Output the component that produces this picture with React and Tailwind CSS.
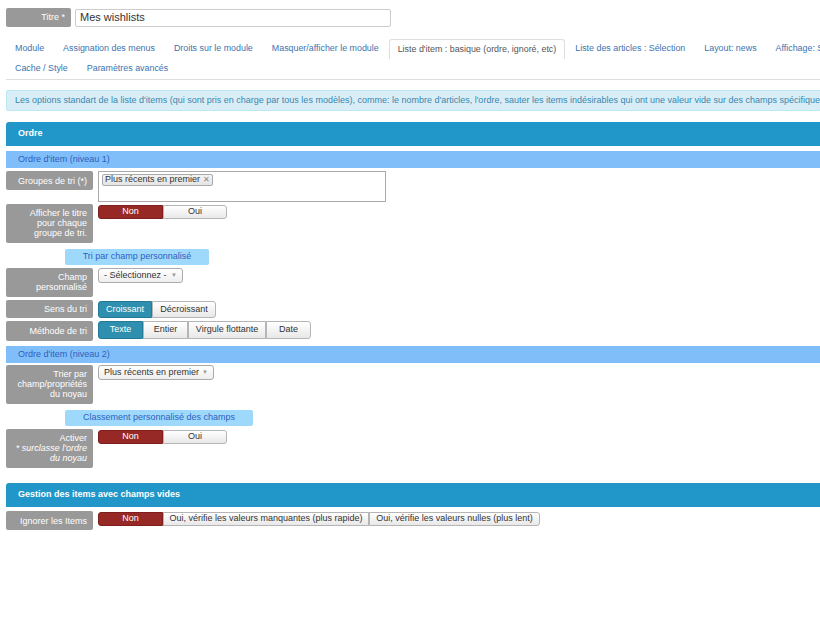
import React from "react";

const tabsRow1 = [
  "Module",
  "Assignation des menus",
  "Droits sur le module",
  "Masquer/afficher le module",
  "Liste d'item : basique (ordre, ignoré, etc)",
  "Liste des articles : Sélection",
  "Layout: news",
  "Affichage: Sous-titre",
];
const tabsRow2 = ["Cache / Style", "Paramètres avancés"];

function Label({ children, h, w = "w-[87px]", center }) {
  return (
    <div
      className={`${w} ${h} shrink-0 bg-[#999999] rounded-[2px] text-white text-[9px] leading-[10px] text-right pr-[6px] ${
        center ? "flex items-center justify-end" : "pt-[4px]"
      }`}
    >
      {children}
    </div>
  );
}

function BtnGroup({ items, active, activeCls, h = "h-[14px]" }) {
  return (
    <div className="flex">
      {items.map(([t, w], i) => (
        <div
          key={t}
          className={`${w} ${h} flex items-center justify-center text-[9px] border ${
            i === 0 ? "rounded-l-[3px]" : ""
          } ${i === items.length - 1 ? "rounded-r-[3px]" : ""} ${
            i === active
              ? activeCls
              : "bg-gradient-to-b from-white to-[#e8e8e8] border-[#b5b5b5] text-[#333]"
          }`}
        >
          {t}
        </div>
      ))}
    </div>
  );
}

const red = "bg-[#962826] border-[#7e1f1d] text-white";
const teal = "bg-[#2e8fae] border-[#23799a] text-white";

function Select({ text, w }) {
  return (
    <div
      className={`${w} h-[15px] flex items-center justify-between px-[5px] border border-[#aaa] rounded-[3px] bg-gradient-to-b from-white to-[#eee] text-[9px] text-[#333]`}
    >
      <span>{text}</span>
      <span className="text-[6px] text-[#999]">▼</span>
    </div>
  );
}

function Bar({ children }) {
  return (
    <div className="h-[17px] mt-[5px] bg-[#80bef9] text-[#2f5fbd] text-[9px] flex items-center pl-[12px]">
      {children}
    </div>
  );
}

function Header({ children, mt }) {
  return (
    <div className={`h-[24px] ${mt} bg-[#2196c8] rounded-tl-[3px] text-white text-[9px] font-bold flex items-center pl-[12px]`}>
      {children}
    </div>
  );
}

function Sub({ children, w }) {
  return (
    <div className={`${w} ml-[59px] h-[16px] bg-[#9ed9fc] rounded-[2px] text-[#2f5fbd] text-[9px] flex items-center justify-center`}>
      {children}
    </div>
  );
}

function Tab({ t, active }) {
  return (
    <div
      className={`h-[20px] px-[8px] mr-[1px] flex items-center text-[8.9px] whitespace-nowrap ${
        active
          ? "border border-b-0 border-[#dddddd] rounded-t-[3px] text-[#555]"
          : "border border-transparent text-[#3b74b0]"
      }`}
    >
      {t}
    </div>
  );
}

export default function App() {
  return (
    <div
      className="w-[820px] h-[634px] overflow-hidden bg-white"
      style={{ fontFamily: '"Liberation Sans", Arial, sans-serif' }}
    >
      <div className="w-[900px] pl-[6px]">
        {/* Titre */}
        <div className="flex items-center gap-[4px] pt-[8px]">
          <div className="w-[65px] h-[19px] bg-[#999999] rounded-[2px] text-white text-[9px] flex items-center justify-end pr-[6px]">
            Titre *
          </div>
          <div className="w-[316px] h-[18px] border border-[#ccc] rounded-[2px] text-[11px] text-[#333] flex items-center pl-[4px]">
            Mes wishlists
          </div>
        </div>

        {/* Tabs */}
        <div className="mt-[12px] w-[894px] border-b border-[#dddddd]">
          <div className="flex flex-nowrap">
            {tabsRow1.map((t, i) => (
              <Tab key={t} t={t} active={i === 4} />
            ))}
          </div>
          <div className="flex flex-nowrap">
            {tabsRow2.map((t) => (
              <Tab key={t} t={t} />
            ))}
          </div>
        </div>

        {/* Info */}
        <div className="mt-[10px] h-[21px] bg-[#d9edf7] border border-[#bce8f1] rounded-[2px] text-[#3a87ad] text-[9px] flex items-center pl-[8px] whitespace-nowrap overflow-hidden">
          Les options standart de la liste d'items (qui sont pris en charge par tous les modèles), comme: le nombre d'articles, l'ordre, sauter les items indésirables qui ont une valeur vide sur des champs spécifiques
        </div>

        <Header mt="mt-[11px]">Ordre</Header>
        <Bar>Ordre d'item (niveau 1)</Bar>

        <div className="flex gap-[5px] mt-[3px]">
          <Label h="h-[19px]" center>Groupes de tri (*)</Label>
          <div className="w-[288px] h-[31px] border border-[#aaa] pt-[2px] pl-[3px] flex items-start">
            <div className="flex items-center h-[12px] px-[2px] border border-[#aaa] rounded-[2px] bg-gradient-to-b from-[#f4f4f4] to-[#e4e4e4] text-[9px] text-[#333]">
              Plus récents en premier
              <span className="ml-[3px] text-[8px] text-[#888]">✕</span>
            </div>
          </div>
        </div>

        <div className="flex gap-[5px] mt-[2px]">
          <Label h="h-[39px]">
            Afficher le titre
            <br />
            pour chaque
            <br />
            groupe de tri.
          </Label>
          <div className="pt-[1px]">
            <BtnGroup items={[["Non", "w-[65px]"], ["Oui", "w-[64px]"]]} active={0} activeCls={red} />
          </div>
        </div>

        <div className="mt-[6px]">
          <Sub w="w-[144px]">Tri par champ personnalisé</Sub>
        </div>

        <div className="flex gap-[5px] mt-[3px]">
          <Label h="h-[29px]">
            Champ
            <br />
            personnalisé
          </Label>
          <Select text="- Sélectionnez -" w="w-[85px]" />
        </div>

        <div className="flex gap-[5px] mt-[3px]">
          <Label h="h-[18px]" center>Sens du tri</Label>
          <div className="pt-[1px]">
            <BtnGroup
              h="h-[17px]"
              items={[["Croissant", "w-[54px]"], ["Décroissant", "w-[64px]"]]}
              active={0}
              activeCls={teal}
            />
          </div>
        </div>

        <div className="flex gap-[5px] mt-[3px]">
          <Label h="h-[20px]" center>Méthode de tri</Label>
          <BtnGroup
            h="h-[18px]"
            items={[
              ["Texte", "w-[45px]"],
              ["Entier", "w-[45px]"],
              ["Virgule flottante", "w-[78px]"],
              ["Date", "w-[45px]"],
            ]}
            active={0}
            activeCls={teal}
          />
        </div>

        <Bar>Ordre d'item (niveau 2)</Bar>

        <div className="flex gap-[5px] mt-[2px]">
          <Label h="h-[39px]">
            Trier par
            <br />
            champ/propriétés
            <br />
            du noyau
          </Label>
          <Select text="Plus récents en premier" w="w-[116px]" />
        </div>

        <div className="mt-[6px]">
          <Sub w="w-[188px]">Classement personnalisé des champs</Sub>
        </div>

        <div className="flex gap-[5px] mt-[3px]">
          <Label h="h-[39px]">
            Activer
            <br />
            <i>* surclasse l'ordre</i>
            <br />
            <i>du noyau</i>
          </Label>
          <div className="pt-[1px]">
            <BtnGroup items={[["Non", "w-[65px]"], ["Oui", "w-[64px]"]]} active={0} activeCls={red} />
          </div>
        </div>

        <Header mt="mt-[15px]">Gestion des items avec champs vides</Header>

        <div className="flex gap-[5px] mt-[4px]">
          <Label h="h-[19px]" center>Ignorer les Items</Label>
          <div className="pt-[1px]">
            <BtnGroup
              items={[
                ["Non", "w-[65px]"],
                ["Oui, vérifie les valeurs manquantes (plus rapide)", "w-[206px]"],
                ["Oui, vérifie les valeurs nulles (plus lent)", "w-[171px]"],
              ]}
              active={0}
              activeCls={red}
            />
          </div>
        </div>
      </div>
    </div>
  );
}
